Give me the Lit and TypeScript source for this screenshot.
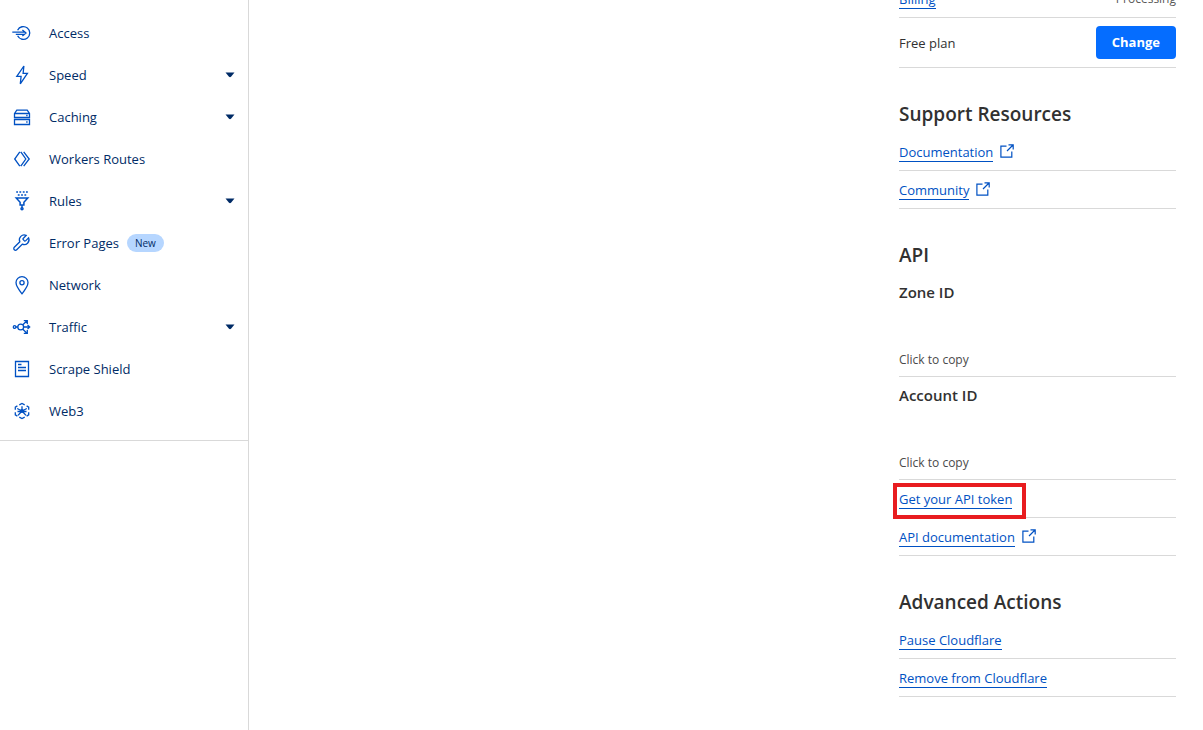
import { LitElement, html, svg, css, nothing, TemplateResult, SVGTemplateResult } from "lit";
import { customElement, property } from "lit/decorators.js";

const icons: Record<string, SVGTemplateResult> = {
  access: svg`<path d="M5.6 7.2a6.4 6.4 0 1 1 0 5.600"/><path d="M.3 9.200H13.600M3.800 11.300H12.400M10.400 6.900l3.600 3.100-3.600 3.100"/>`,
  speed: svg`<path d="M11.900 1 4.800 11.400h4.300L8.300 18.800 15.400 8.400h-4.300z"/>`,
  caching: svg`<path d="M2.500 6.500 4.800 3.200h10.400l2.300 3.300v4h-15zM2.500 6.500h15M2.500 12.500h15v5h-15z"/><path d="M14.200 8.500h1.400M14.200 15h1.400"/>`,
  workers: svg`<path d="M7.800 2.800 2.700 10l5.100 7.200M8.800 2.800l5 7.200-5 7.200M11.700 2.800l5.500 7.200-5.500 7.200"/>`,
  rules: svg`<g stroke-width="1.500"><path d="M4.200 1h1.800M7.400 1h1.800M10.800 1h1.800M14 1h1.800M5.800 4h1.800M9.100 4h1.800M12.400 4h1.800"/><path d="M4.200 6.900h11.600l-3.900 4.400v2.800H8.100v-2.800zM10 14.100v3"/><circle cx="10" cy="17.800" r="1"/></g>`,
  wrench: svg`<path transform="translate(-.6 .4) scale(.8)" stroke-width="1.600" d="M14.700 6.300a1 1 0 0 0 0 1.400l1.600 1.600a1 1 0 0 0 1.400 0l3.770-3.770a6 6 0 0 1-7.940 7.940l-6.910 6.910a2.120 2.120 0 0 1-3-3l6.910-6.910a6 6 0 0 1 7.940-7.940l-3.760 3.760z"/>`,
  pin: svg`<path d="M10 18.800C6.500 14.500 4 11 4 7.600a6 6 0 0 1 12 0c0 3.400-2.500 6.900-6 11.200z"/><circle cx="10" cy="7.700" r="2.100"/>`,
  traffic: svg`<circle cx="2.600" cy="10" r="1.300"/><circle cx="8.700" cy="10" r="2.900"/><path d="M3.900 10h1.900M11.600 10h6M10.800 7.800l4.200-4M10.800 12.200l4.200 4M11.800 3.700h3.500v3.400M11.800 16.300h3.500v-3.400M15.500 7.900l2.200 2.100-2.200 2.100"/>`,
  scrape: svg`<path d="M3.500 2.500h13v15h-13z"/><path d="M6 5.500h3.500M6 8.500h8M6 11.500h8"/>`,
  web3: svg`<path d="M7.300 3.900 10 2.500l2.700 1.400M14.600 4.900l2.100 1.200v2.600M16.700 11.300v2.600l-2.100 1.200M12.700 16.100 10 17.500l-2.700-1.400M5.400 15.100l-2.100-1.200v-2.600M3.300 8.700V6.100l2.100-1.200"/><path d="M10 5.200v4.800M10 10 5.200 7.500M10 10l4.800-2.500M10 10l-4 4.400M10 10l4 4.400M5.500 10.500h9"/><circle cx="10" cy="10" r="1.300"/>`,
};

@customElement("nav-item")
class NavItem extends LitElement {
  @property() label = "";
  @property() icon = "";
  @property() badge = "";
  @property({ type: Boolean }) expandable = false;

  static styles = css`
    :host { display: block; }
    .item {
      display: flex;
      align-items: center;
      gap: 8px;
      height: 42px;
      padding: 0 13px 0 12px;
      color: #002b66;
      font-size: 13px;
      line-height: 20px;
      text-decoration: none;
    }
    .icon {
      width: 20px;
      height: 20px;
      margin-right: 9px;
      fill: none;
      stroke: #0051c3;
      stroke-width: 1.3;
    }
    .badge {
      padding: 0 8px;
      border-radius: 9px;
      background: #b6d6ff;
      font-size: 10px;
      line-height: 18px;
    }
    .caret {
      width: 10px;
      height: 6px;
      margin-left: auto;
      fill: #002b66;
    }
  `;

  render() {
    return html`<a class="item" href="#">
      <svg class="icon" viewBox="0 0 20 20" aria-hidden="true">${icons[this.icon]}</svg>
      <span>${this.label}</span>
      ${this.badge ? html`<span class="badge">${this.badge}</span>` : nothing}
      ${this.expandable
        ? html`<svg class="caret" viewBox="0 0 10 6" aria-hidden="true"><path d="M.5 .5h9L6 4.700Q5 5.600 4 4.700z"/></svg>`
        : nothing}
    </a>`;
  }
}

const navItems = [
  { label: "Access", icon: "access" },
  { label: "Speed", icon: "speed", expandable: true },
  { label: "Caching", icon: "caching", expandable: true },
  { label: "Workers Routes", icon: "workers" },
  { label: "Rules", icon: "rules", expandable: true },
  { label: "Error Pages", icon: "wrench", badge: "New" },
  { label: "Network", icon: "pin" },
  { label: "Traffic", icon: "traffic", expandable: true },
  { label: "Scrape Shield", icon: "scrape" },
  { label: "Web3", icon: "web3" },
];

@customElement("app-root")
class AppRoot extends LitElement {
  static styles = css`
    :host {
      display: block;
      height: 100vh;
      overflow: hidden;
      background: #fff;
      color: #313131;
      font-family: "Open Sans", "Noto Sans", sans-serif;
      font-size: 13px;
      line-height: 20px;
    }
    .layout {
      display: grid;
      grid-template-columns: 249px 1fr 277px;
      height: 100%;
      padding-right: 27px;
    }
    .sidebar { border-right: 1px solid #d9d9d9; }
    .nav {
      padding: 12px 0 8px;
      border-bottom: 1px solid #d9d9d9;
    }
    .details {
      margin-top: -20px;
      grid-column: 3;
    }
    .row {
      display: flex;
      align-items: center;
      padding: 8px 0;
      border-bottom: 1px solid #d9d9d9;
    }
    .spread { justify-content: space-between; }
    .muted {
      color: #595959;
      font-size: 12px;
    }
    .link {
      padding-top: 2px;
      border-bottom: 1px solid #0051c3;
      color: #0051c3;
      line-height: 18px;
      text-decoration: none;
    }
    .external {
      width: 14px;
      height: 14px;
      margin: 0 0 2px 7px;
      fill: none;
      stroke: #0051c3;
      stroke-width: 1.2;
    }
    .button {
      height: 33px;
      padding: 0 16px 2px;
      border: 0;
      border-radius: 4px;
      background: #056dff;
      color: #fff;
      font: 700 13px/20px "Open Sans", "Noto Sans", sans-serif;
    }
    .title {
      margin: 32px 0 5px;
      font-size: 19px;
      font-weight: 600;
      line-height: 28px;
    }
    .identifier {
      display: flex;
      flex-direction: column;
      justify-content: space-between;
      align-items: flex-start;
      min-height: 87px;
      padding: 8px 0 7px;
      border-bottom: 1px solid #d9d9d9;
    }
    .subtitle {
      margin: 0;
      font-size: 15px;
      font-weight: 600;
      line-height: 20px;
    }
    .copy {
      padding: 0;
      border: 0;
      background: none;
      color: #4a4a4a;
      font: 12px/18px "Open Sans", "Noto Sans", sans-serif;
    }
    .highlight { position: relative; }
    .highlight::after {
      content: "";
      position: absolute;
      inset: -5px -14px -11px -6px;
      border: 4px solid #e81c1f;
      pointer-events: none;
    }
  `;

  private link(label: string, external = false, highlight = false): TemplateResult {
    return html`<div class="row">
      <a class="link ${highlight ? "highlight" : ""}" href="#">${label}</a>
      ${external
        ? html`<svg class="external" viewBox="0 0 14 14" aria-hidden="true"><path d="M6.500 2.200H.9v10.900h10.900V7.500M8.500.8h4.700v4.700M13 1 7 7"/></svg>`
        : nothing}
    </div>`;
  }

  private identifier(label: string): TemplateResult {
    return html`<div class="identifier">
      <h3 class="subtitle">${label}</h3>
      <button class="copy" type="button">Click to copy</button>
    </div>`;
  }

  render() {
    return html`<div class="layout">
      <aside class="sidebar">
        <nav class="nav">
          ${navItems.map(
            (n) => html`<nav-item .label=${n.label} .icon=${n.icon} .badge=${n.badge ?? ""} .expandable=${!!n.expandable}></nav-item>`
          )}
        </nav>
      </aside>
      <main class="details">
        <section>
          <div class="row spread">
            <a class="link" href="#">Billing</a>
            <span class="muted">Processing</span>
          </div>
          <div class="row spread">
            <span>Free plan</span>
            <button class="button" type="button">Change</button>
          </div>
        </section>
        <section>
          <h2 class="title">Support Resources</h2>
          ${this.link("Documentation", true)} ${this.link("Community", true)}
        </section>
        <section>
          <h2 class="title">API</h2>
          ${this.identifier("Zone ID")} ${this.identifier("Account ID")}
          ${this.link("Get your API token", false, true)} ${this.link("API documentation", true)}
        </section>
        <section>
          <h2 class="title">Advanced Actions</h2>
          ${this.link("Pause Cloudflare")} ${this.link("Remove from Cloudflare")}
        </section>
      </main>
    </div>`;
  }
}
